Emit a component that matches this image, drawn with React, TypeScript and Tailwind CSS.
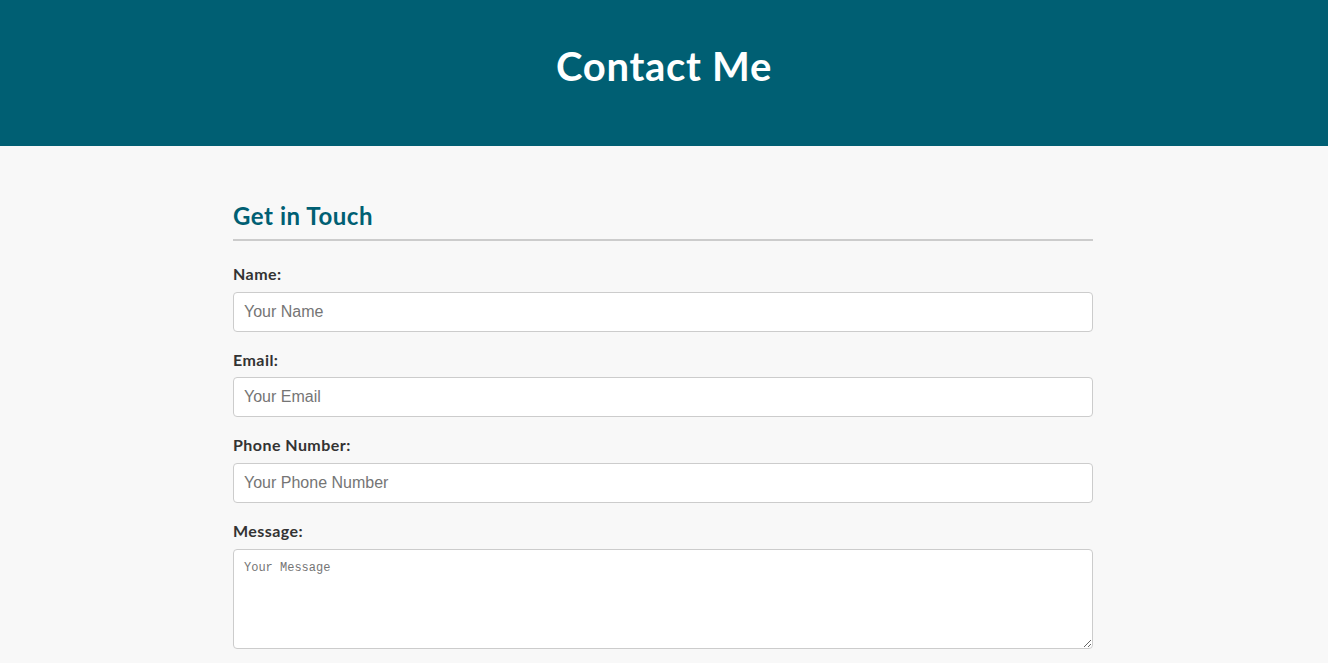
export default function App() {
  const fields = [
    { label: "Name:", ph: "Your Name", type: "text" },
    { label: "Email:", ph: "Your Email", type: "email" },
    { label: "Phone Number:", ph: "Your Phone Number", type: "tel" },
  ];
  return (
    <div className="min-h-screen bg-[#f8f8f8] font-['Lato',sans-serif] text-[#333] pr-[2px]">
      <header className="bg-[#005f73] h-[146px] pt-[40px] -mr-[2px]">
        <h1 className="text-center text-white font-bold text-[40px] leading-[52px] tracking-[0.7px]">Contact Me</h1>
      </header>
      <main className="w-[860px] mx-auto pt-[54px]">
        <h2 className="text-[#005f73] font-bold text-[24px] leading-[32px] pb-[7px] border-b-2 border-[#cccccc] tracking-[0.55px]">
          Get in Touch
        </h2>
        <form className="pt-[25px]">
          {fields.map((f) => (
            <div key={f.label} className="mb-[20px]">
              <label className="block font-bold text-[16px] leading-[15px] mb-[10.67px] text-[#333] tracking-[0.45px]">{f.label}</label>
              <input
                type={f.type}
                placeholder={f.ph}
                className="block w-full h-[40px] px-[10px] bg-white border border-[#cccccc] rounded-[4px] text-[16px] font-['Liberation_Sans',Arial,sans-serif] placeholder:text-[#757575] outline-none"
              />
            </div>
          ))}
          <div>
            <label className="block font-bold text-[16px] leading-[15px] mb-[10.67px] text-[#333] tracking-[0.45px]">Message:</label>
            <textarea
              placeholder="Your Message"
              className="block w-full h-[100px] px-[10px] pt-[9px] bg-white border border-[#cccccc] rounded-[4px] text-[12px] font-['Liberation_Mono',monospace] placeholder:text-[#757575] outline-none"
            />
          </div>
        </form>
      </main>
    </div>
  );
}
